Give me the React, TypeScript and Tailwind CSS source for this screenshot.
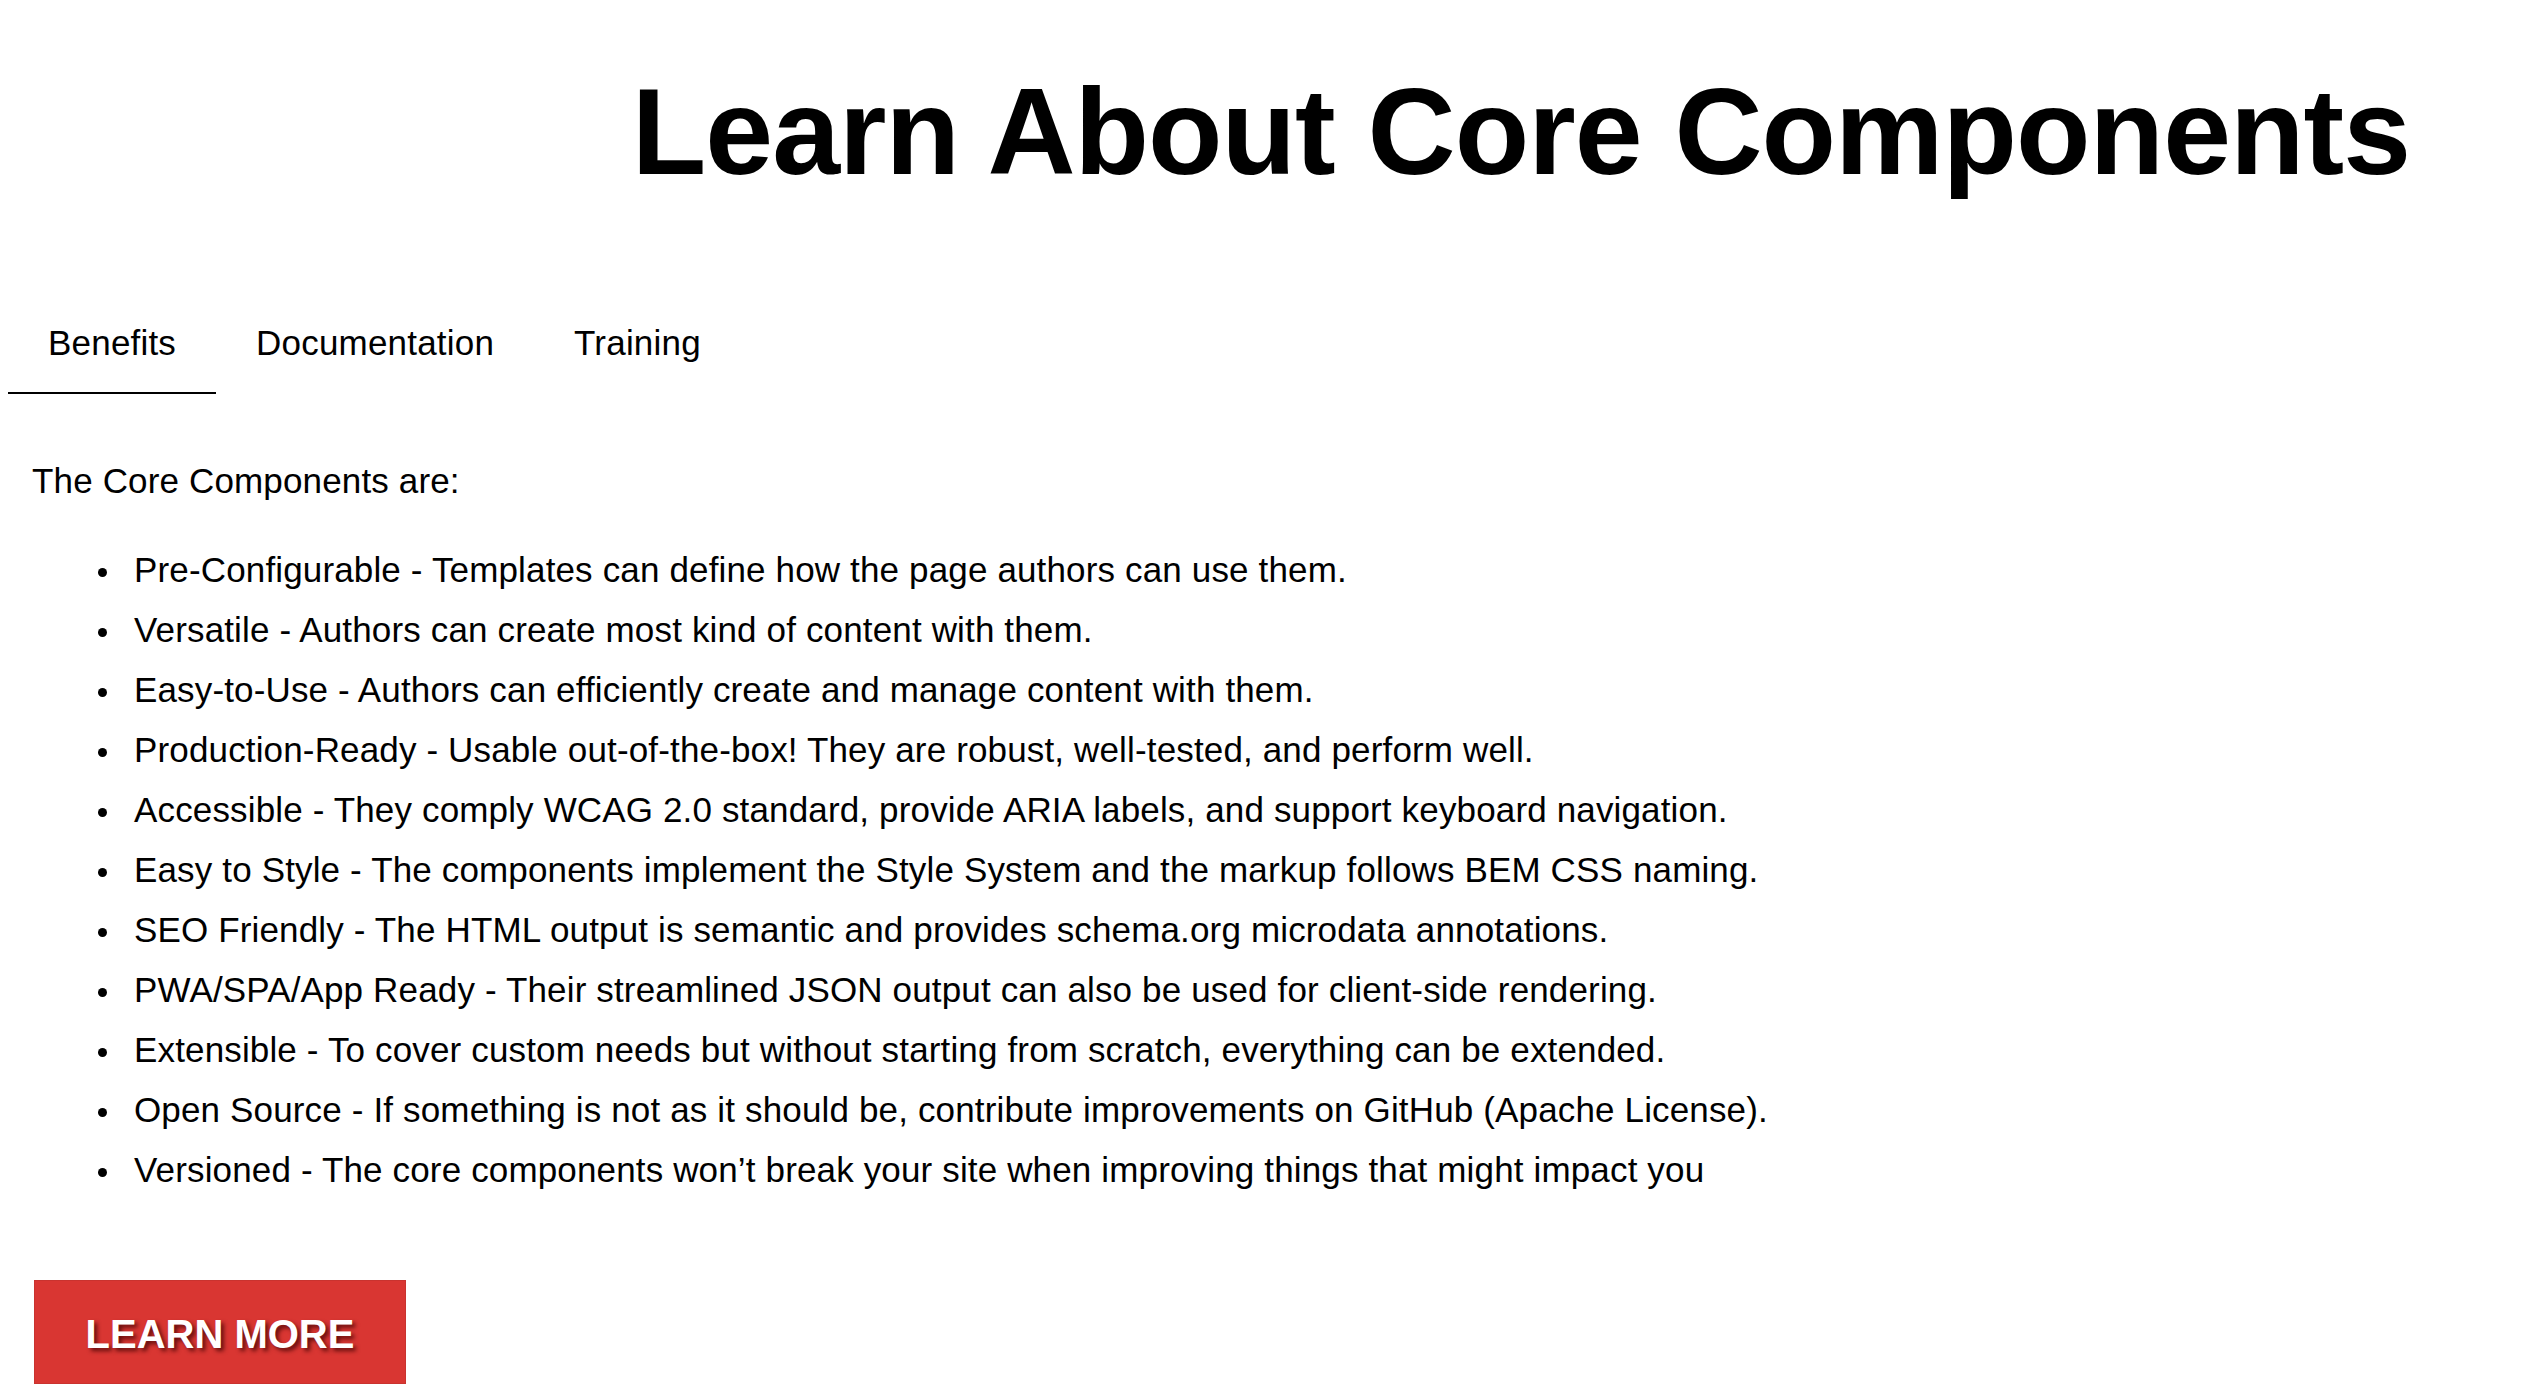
import React from "react";

const items = [
  "Pre-Configurable - Templates can define how the page authors can use them.",
  "Versatile - Authors can create most kind of content with them.",
  "Easy-to-Use - Authors can efficiently create and manage content with them.",
  "Production-Ready - Usable out-of-the-box! They are robust, well-tested, and perform well.",
  "Accessible - They comply WCAG 2.0 standard, provide ARIA labels, and support keyboard navigation.",
  "Easy to Style - The components implement the Style System and the markup follows BEM CSS naming.",
  "SEO Friendly - The HTML output is semantic and provides schema.org microdata annotations.",
  "PWA/SPA/App Ready - Their streamlined JSON output can also be used for client-side rendering.",
  "Extensible - To cover custom needs but without starting from scratch, everything can be extended.",
  "Open Source - If something is not as it should be, contribute improvements on GitHub (Apache License).",
  "Versioned - The core components won\u2019t break your site when improving things that might impact you",
];

export default function App() {
  return (
    <div className="min-h-[1398px] w-full bg-white text-black font-['Liberation_Sans',Arial,sans-serif]">
      <h1 className="mt-[59px] flex justify-end pr-[116px] text-[122px] leading-[146px] font-bold tracking-[-1px] text-black">
        Learn About Core Components
      </h1>

      <div className="mt-[92px] flex pl-[8px] text-[35px] leading-[40px] tracking-[0.2px]">
        <div className="px-[40px] pt-[26px] pb-[29px] border-b-2 border-black">Benefits</div>
        <div className="px-[40px] pt-[26px] pb-[29px] border-b-2 border-transparent">Documentation</div>
        <div className="px-[40px] pt-[26px] pb-[29px] border-b-2 border-transparent">Training</div>
      </div>

      <div className="mt-[57px] pl-[32px] text-[35px] leading-[60px] tracking-[0.15px]">
        <p>The Core Components are:</p>
        <ul className="mt-[29px] pl-[66px]">
          {items.map((t) => (
            <li key={t} className="flex items-start">
              <span className="mt-[28px] mr-[27px] h-[9px] w-[9px] shrink-0 rounded-full bg-black" />
              <span>{t}</span>
            </li>
          ))}
        </ul>
      </div>

      <div className="mt-[80px] pl-[34px]">
        <button className="flex h-[104px] w-[372px] items-center justify-center border border-[#c9332f] bg-[#d93632] pt-[3px] text-[40px] font-bold text-white [text-shadow:3px_3px_4px_rgba(60,0,0,0.75)]">
          LEARN MORE
        </button>
      </div>
    </div>
  );
}
